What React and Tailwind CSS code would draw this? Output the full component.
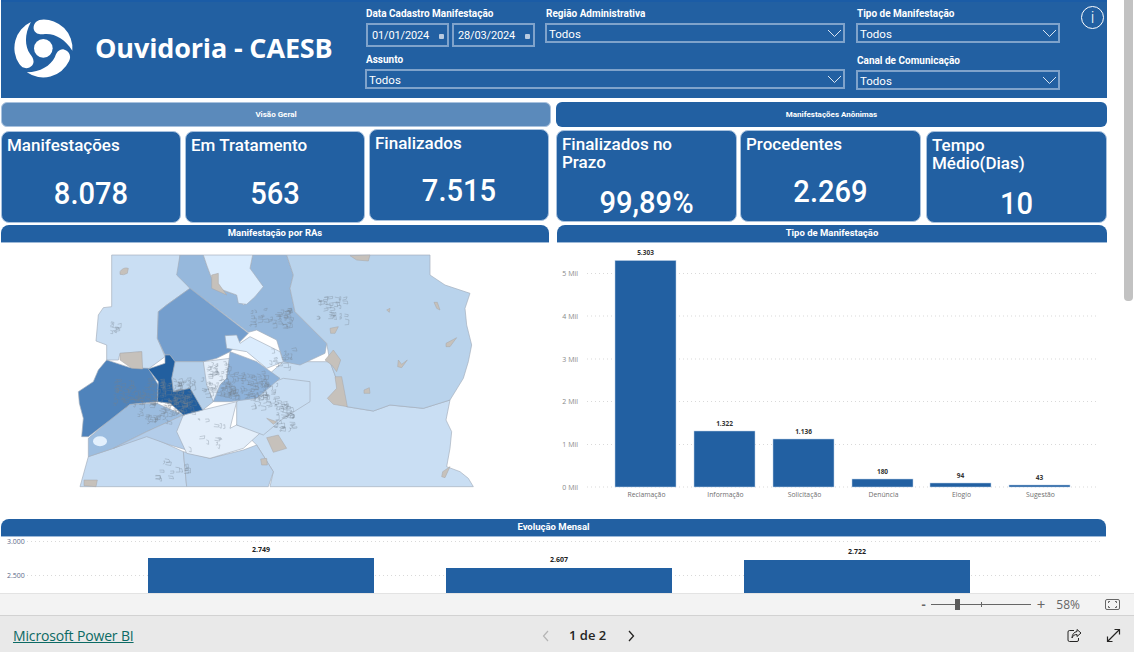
const DIN = "font-['Roboto',sans-serif]";
const SEGOE = "font-['Open_Sans',sans-serif]";

const CARDS_LEFT = [
  { title: ["Manifestações"], value: "8.078", box: "w-[180px] h-[92px] mt-[4px]", gap: "mt-[23px]" },
  { title: ["Em Tratamento"], value: "563", box: "w-[180px] h-[92px] mt-[4px] ml-[4px]", gap: "mt-[23px]" },
  { title: ["Finalizados"], value: "7.515", box: "w-[180px] h-[92px] mt-[2px] ml-[4px]", gap: "mt-[22px]" },
];

const CARDS_RIGHT = [
  { title: ["Finalizados no", "Prazo"], value: "99,89%", box: "w-[181px] h-[92px] mt-[3px]", gap: "mt-[15px]" },
  { title: ["Procedentes"], value: "2.269", box: "w-[181px] h-[92px] mt-[3px] ml-[3px]", gap: "mt-[22px]" },
  { title: ["Tempo", "Médio(Dias)"], value: "10", box: "w-[181px] h-[92px] mt-[4px] ml-[5px]", gap: "mt-[15px]" },
];

const TIPO_BARS = [
  { label: "Reclamação", value: "5.303", x: 615, top: 260.5 },
  { label: "Informação", value: "1.322", x: 694, top: 431 },
  { label: "Solicitação", value: "1.136", x: 773, top: 439 },
  { label: "Denúncia", value: "180", x: 852, top: 479 },
  { label: "Elogio", value: "94", x: 930, top: 483 },
  { label: "Sugestão", value: "43", x: 1009, top: 485 },
];

const TIPO_TICKS = [
  ["5 Mil", 273.5],
  ["4 Mil", 316],
  ["3 Mil", 359],
  ["2 Mil", 401.5],
  ["1 Mil", 444.5],
  ["0 Mil", 487],
];

// bairros do mapa, em ordem de pintura
const REGIONS = [
  ["#c9def3", "M125 30 L330 30 L325 90 L360 130 L290 180 L265 200 L262 280 L285 335 L235 372 L215 370 L215 320 L150 325 L145 345 L110 345 L110 300 L78 288 L85 210 L100 188 L125 185 Z"],
  ["#c9def3", "M640 350 L780 350 L830 485 L910 498 L960 480 L1060 490 L1140 465 L1128 525 L1145 560 L1140 610 L1130 665 L1170 680 L1195 700 L1210 725 L600 725 L610 680 L560 600 L500 540 L560 420 Z"],
  ["#96b8dc", "M330 30 L400 30 L410 60 L425 100 L440 130 L500 150 L520 180 L555 155 L545 110 L540 70 L548 30 L650 30 L670 90 L660 130 L675 200 L770 295 L765 325 L690 360 L640 350 L620 285 L560 255 L535 262 L360 130 L320 90 Z"],
  ["#dbecfd", "M400 30 L548 30 L540 70 L580 125 L555 155 L530 178 L505 175 L500 150 L445 130 L425 100 L410 60 Z"],
  ["#b9d3ec", "M650 30 L1080 30 L1080 90 L1125 120 L1200 145 L1185 190 L1190 240 L1205 300 L1195 350 L1180 400 L1140 465 L1060 490 L960 480 L910 498 L830 485 L780 350 L770 295 L675 200 L660 130 L670 90 Z"],
  ["#749ecd", "M360 130 L535 265 L500 300 L480 320 L440 340 L400 350 L315 350 L300 330 L285 330 L262 280 L265 200 L290 180 Z"],
  ["#c5dbf2", "M55 635 L130 610 L230 570 L340 620 L350 725 L30 725 Z"],
  ["#bbd4ee", "M340 620 L420 640 L520 615 L560 600 L610 680 L595 725 L350 725 Z"],
  ["#9cbde0", "M55 580 L120 525 L180 478 L260 475 L340 510 L230 560 L130 610 L55 635 Z"],
  ["#b3cdea", "M130 610 L230 560 L340 510 L390 570 L350 615 L300 600 L230 575 Z"],
  ["#e3eefa", "M340 510 L398 495 L500 470 L480 550 L500 540 L575 560 L520 610 L420 640 L350 625 L320 560 Z"],
  ["#c9def3", "M500 470 L560 430 L640 400 L720 410 L720 470 L640 520 L580 570 L500 540 Z"],
  ["#4f83bb", "M235 370 L180 368 L110 345 L85 375 L70 410 L25 440 L28 475 L40 520 L35 575 L55 575 L120 525 L180 478 L262 470 L265 420 Z"],
  ["#b6d0ea", "M315 350 L400 350 L430 470 L398 495 L360 430 L310 440 L305 400 Z"],
  ["#e3eefa", "M400 350 L480 340 L470 400 L430 470 L410 420 Z"],
  ["#8eb2da", "M480 320 L560 350 L630 400 L560 460 L480 470 L430 470 L450 420 L470 400 Z"],
  ["#225f9f", "M235 372 L285 355 L285 330 L300 330 L315 350 L305 400 L310 440 L360 430 L398 495 L340 510 L300 475 L262 470 L265 410 Z"],
  ["#dbecfd", "M465 272 L500 270 L510 295 L540 275 L630 320 L640 350 L590 370 L530 320 L470 310 Z"],
];

const BLOBS = [
  "M150 80 Q160 65 175 70 L172 85 Q160 92 150 88 Z",
  "M840 32 L900 30 L895 48 L860 45 Z",
  "M150 325 L215 320 L218 372 L185 370 L150 345 Z",
  "M765 345 L790 315 L812 345 L800 380 L785 360 Z",
  "M795 395 L815 395 L832 485 L790 478 L772 460 L800 430 Z",
  "M1128 295 L1160 278 L1140 305 L1128 305 Z",
  "M985 345 L995 358 L1012 345 L995 368 L983 365 Z",
  "M882 435 L898 428 L900 445 L882 445 Z",
  "M590 578 L625 570 L650 610 L610 622 Z",
  "M590 520 L620 530 L610 538 Z",
  "M42 705 L82 705 L78 725 L42 722 Z",
  "M572 642 L590 640 L592 660 L575 660 Z",
  "M1118 680 L1140 665 L1125 698 L1115 695 Z",
  "M1092 172 L1102 172 L1110 195 L1100 190 Z",
  "M950 195 L960 190 L958 202 Z",
  "M425 90 L445 85 L445 115 L470 150 L425 130 Z",
  "M780 250 L805 245 L795 265 L782 265 Z",
];

// manchas de ruas: centro x, centro y, raio x, raio y, quantidade
const STREETS = [
  [195, 440, 65, 40, 70],
  [320, 450, 50, 50, 110],
  [440, 400, 45, 50, 50],
  [520, 420, 75, 40, 80],
  [250, 510, 50, 20, 22],
  [580, 450, 45, 35, 25],
  [640, 510, 30, 40, 40],
  [630, 340, 35, 30, 15],
  [785, 190, 45, 35, 30],
  [600, 215, 60, 25, 40],
  [300, 670, 50, 30, 16],
  [400, 560, 60, 50, 12],
  [130, 245, 14, 20, 8],
];

function streetPaths() {
  let seed = 7;
  const rnd = () => {
    seed = (seed * 16807) % 2147483647;
    return seed / 2147483647;
  };
  const out = [];
  STREETS.forEach(([cx, cy, rx, ry, n]) => {
    for (let i = 0; i < n; i++) {
      const x = cx + (rnd() * 2 - 1) * rx;
      const y = cy + (rnd() * 2 - 1) * ry;
      const w = 4 + rnd() * 12;
      const h = 4 + rnd() * 10;
      out.push(`M${x} ${y} l${w} ${rnd() * 6 - 3} l${rnd() * 6 - 3} ${h} l${-w} ${rnd() * 6 - 3}`);
    }
  });
  return out.join(" ");
}

function Logo() {
  const blade = "M187 110 A86 86 0 0 0 95 17 C75 18 68 35 72 48 C78 62 92 62 105 60 C135 58 165 75 187 110 Z";
  return (
    <svg width="66" height="70" viewBox="0 0 198 210" className="mt-[-2px] shrink-0">
      <g fill="#ffffff">
        <circle cx="100" cy="103" r="28" />
        <path d={blade} />
        <path d={blade} transform="rotate(120 100 103)" />
        <path d={blade} transform="rotate(240 100 103)" />
      </g>
    </svg>
  );
}

function Select({ className = "" }) {
  return (
    <div className={`flex h-[20px] items-center justify-between border-2 border-[#7fa3cb] pl-[2px] pr-[1px] text-[11.5px] text-white ${className}`}>
      <span className="mt-[3px]">Todos</span>
      <svg width="15" height="9" viewBox="0 0 15 9" fill="none" stroke="#dbe6f2" strokeWidth="1">
        <path d="M1 1 L7.5 7.5 L14 1" />
      </svg>
    </div>
  );
}

function DateBox({ value }) {
  return (
    <div className="flex h-[24px] w-[83px] items-center justify-between border-2 border-[#7fa3cb] pl-[4px] pr-[3px] text-[11px] tracking-[-0.15px] text-white">
      <span className="mt-[2px]">{value}</span>
      <span className="mt-[2px] h-[5px] w-[5px] rounded-[1px] bg-[#b9cbe0]" />
    </div>
  );
}

function FilterLabel({ children }) {
  return <div className="ml-[1px] mb-[3px] h-[12px] text-[10px] font-bold leading-[12px] text-white">{children}</div>;
}

function Header() {
  return (
    <header className={`flex h-[98px] items-start border-t-2 border-[#1b5ca6] bg-[#2260a2] ${DIN}`}>
      <div className="flex h-full w-[364px] shrink-0 items-center pl-[9px]">
        <Logo />
        <span className={`mb-[3px] ml-[19px] whitespace-nowrap text-[27px] font-bold tracking-[-0.15px] text-white ${SEGOE}`}>Ouvidoria - CAESB</span>
      </div>
      <div className="grid grid-cols-[170px_301px_204px] gap-x-[10px] gap-y-[7px] pt-[6px]">
        <div>
          <FilterLabel>Data Cadastro Manifestação</FilterLabel>
          <div className="ml-[1px] flex gap-[3px]">
            <DateBox value="01/01/2024" />
            <DateBox value="28/03/2024" />
          </div>
        </div>
        <div>
          <FilterLabel>Região Administrativa</FilterLabel>
          <Select className="mr-[1px]" />
        </div>
        <div>
          <FilterLabel>Tipo de Manifestação</FilterLabel>
          <Select />
        </div>
        <div className="col-span-2">
          <FilterLabel>Assunto</FilterLabel>
          <Select className="mr-[1px]" />
        </div>
        <div className="mt-[1px]">
          <FilterLabel>Canal de Comunicação</FilterLabel>
          <Select />
        </div>
      </div>
      <div className="ml-[21px] mt-[4px] flex h-[23px] w-[23px] shrink-0 items-center justify-center rounded-full border-[1.5px] border-white text-[16px] font-light leading-none text-white">
        i
      </div>
    </header>
  );
}

function Card({ card }) {
  return (
    <div className={`shrink-0 rounded-[8px] border border-[#a9c2de] bg-[#2260a2] px-[5px] pt-[4px] text-white ${DIN} ${card.box}`}>
      <div className="text-[17px] font-medium leading-[18px]">
        {card.title.map((t) => (
          <div key={t}>{t}</div>
        ))}
      </div>
      <div className={`scale-x-[0.91] text-center text-[32px] font-medium leading-[32px] ${card.gap}`}>{card.value}</div>
    </div>
  );
}

function SectionTitle({ children, className }) {
  return (
    <div className={`flex h-[18px] items-center justify-center rounded-t-[8px] border-b border-[#9db9d8] bg-[#2260a2] text-[9.5px] font-bold text-white ${DIN} ${className}`}>
      {children}
    </div>
  );
}

function MapaRAs() {
  return (
    <div className="pl-[69px] pt-[2px]">
      <svg width="420" height="250" viewBox="0 0 1260 750">
        {REGIONS.map(([fill, d], i) => (
          <path key={i} d={d} fill={fill} stroke="#a3aebb" strokeWidth="2" strokeLinejoin="round" />
        ))}
        <path d={streetPaths()} fill="none" stroke="#76828f" strokeWidth="1.2" opacity="0.8" />
        {BLOBS.map((d, i) => (
          <path key={i} d={d} fill="#c6c1bb" stroke="#a6a7a8" strokeWidth="1.5" strokeLinejoin="round" />
        ))}
        <ellipse cx="90" cy="589" rx="21" ry="15" fill="#e3f0fd" />
      </svg>
    </div>
  );
}

// coordenadas do svg = coordenadas da tela menos a origem do bloco (556, 243)
function TipoChart() {
  return (
    <svg width="551" height="270" viewBox="556 243 551 270" className="block">
      {TIPO_TICKS.map(([label, y]) => (
        <g key={label}>
          <text x="578" y={y + 2.5} textAnchor="end" fontSize="7" fill="#8a8a8a" fontFamily="Open Sans">{label}</text>
          <line x1="587" x2="1098" y1={y} y2={y} stroke="#d9d9d9" strokeWidth="1" strokeDasharray="1 3" />
        </g>
      ))}
      {TIPO_BARS.map((b) => (
        <g key={b.label}>
          <rect x={b.x} y={b.top} width="61" height={487 - b.top} fill="#2260a2" stroke="#bcd0e6" strokeWidth="0.5" />
          <text x={b.x + 30.5} y={b.top - 5.5} textAnchor="middle" fontSize="6.5" fontWeight="700" fill="#333333" fontFamily="Open Sans">{b.value}</text>
          <text x={b.x + 31.5} y="497" textAnchor="middle" fontSize="6.8" fill="#6f6f6f" fontFamily="Open Sans">{b.label}</text>
        </g>
      ))}
    </svg>
  );
}

function EvolucaoChart() {
  const bars = [
    { x: 148, top: 558, value: "2.749" },
    { x: 446, top: 568, value: "2.607" },
    { x: 744, top: 560, value: "2.722" },
  ];
  return (
    <svg width="1106" height="56" viewBox="1 537 1106 56" className="block">
      <text x="7" y="544" fontSize="7" fill="#5d6b8a" fontFamily="Open Sans">3.000</text>
      <text x="7" y="578" fontSize="7" fill="#5d6b8a" fontFamily="Open Sans">2.500</text>
      <line x1="27" x2="1103" y1="541.5" y2="541.5" stroke="#d9d9d9" strokeDasharray="1 3" />
      <line x1="27" x2="1103" y1="575.5" y2="575.5" stroke="#d9d9d9" strokeDasharray="1 3" />
      {bars.map((b) => (
        <g key={b.x}>
          <rect x={b.x} y={b.top} width="226" height={593 - b.top} fill="#2260a2" />
          <text x={b.x + 113} y={b.top - 6} textAnchor="middle" fontSize="7" fontWeight="700" fill="#222222" fontFamily="Open Sans">{b.value}</text>
        </g>
      ))}
    </svg>
  );
}

function ZoomBar() {
  return (
    <div className={`flex h-[23px] shrink-0 items-center justify-end border-y border-[#d2d2d2] border-t-[#e3e3e3] bg-[#f3f3f3] pr-[14px] text-[#666666] ${SEGOE}`}>
      <span className="text-[13px] font-bold leading-none">-</span>
      <div className="relative ml-[5px] h-[1px] w-[100px] bg-[#666666]">
        <span className="absolute left-[24px] top-[-5px] h-[11px] w-[5px] bg-[#5c5c5c]" />
        <span className="absolute left-[50px] top-[-2px] h-[5px] w-[1px] bg-[#666666]" />
      </div>
      <span className="ml-[6px] text-[15px] leading-none">+</span>
      <span className="ml-[11px] text-[12px]">58%</span>
      <svg width="15" height="11" viewBox="0 0 15 11" className="ml-[25px]" fill="none" stroke="#666666">
        <rect x="0.5" y="0.5" width="14" height="10" rx="1.5" />
        <path d="M3.5 4 V2.5 H5 M10 2.5 H11.5 V4 M3.5 7 V8.5 H5 M10 8.5 H11.5 V7" />
      </svg>
    </div>
  );
}

function Footer() {
  return (
    <footer className={`flex h-[36px] shrink-0 items-center bg-[#e9e9e9] pl-[13px] pr-[13px] pt-[3px] ${SEGOE}`}>
      <a className="w-[120px] whitespace-nowrap text-[14px] tracking-[-0.15px] text-[#0c6a64] underline">Microsoft Power BI</a>
      <div className="ml-[406px] flex items-center">
        <svg width="14" height="14" viewBox="0 0 14 14" fill="none" stroke="#b5b5b5" strokeWidth="1.2">
          <path d="M9 2 L4.5 7 L9 12" />
        </svg>
        <span className="ml-[16px] text-[13px] font-semibold text-[#252423]">1 de 2</span>
        <svg width="14" height="14" viewBox="0 0 14 14" fill="none" stroke="#252423" strokeWidth="1.3" className="ml-[18px]">
          <path d="M5 2 L9.5 7 L5 12" />
        </svg>
      </div>
      <div className="ml-auto flex items-center">
        <svg width="15" height="15" viewBox="0 0 15 15" fill="none" stroke="#252423" strokeWidth="1">
          <path d="M7 2.5 H2.5 a1.5 1.5 0 0 0 -1.5 1.5 V12 a1.5 1.5 0 0 0 1.5 1.5 H10 a1.5 1.5 0 0 0 1.5 -1.5 V10" />
          <path d="M10 1.5 L14 5 L10 8.5 V6.5 C7.5 6.5 6 7.5 5 10 C5 6.5 7 4 10 3.5 Z" />
        </svg>
        <svg width="15" height="15" viewBox="0 0 15 15" fill="none" stroke="#252423" strokeWidth="1.2" className="ml-[24px]">
          <path d="M1.5 13.5 L13.5 1.5 M8.5 1.5 H13.5 V6.5 M1.5 8.5 V13.5 H6.5" />
        </svg>
      </div>
    </footer>
  );
}

export default function App() {
  return (
    <div className="flex h-[652px] w-[1134px] flex-col overflow-hidden bg-white">
      <div className="flex min-h-0 flex-1">
        <main className="ml-[1px] w-[1106px] shrink-0">
          <Header />
          <div className="mt-[4px] flex gap-[5px]">
            <section className="w-[550px] shrink-0">
              <div className={`flex h-[25px] items-center justify-center rounded-[6px] border border-[#a9c2de] bg-[#5b8abb] text-[8px] font-bold text-white ${DIN}`}>Visão Geral</div>
              <div className="flex h-[94px]">
                {CARDS_LEFT.map((c) => (
                  <Card key={c.value} card={c} />
                ))}
              </div>
              <SectionTitle className="mt-[4px] w-[548px]">Manifestação por RAs</SectionTitle>
              <MapaRAs />
            </section>
            <section className="w-[551px] shrink-0">
              <div className={`flex h-[25px] items-center justify-center rounded-[6px] bg-[#2260a2] text-[8px] font-bold text-white ${DIN}`}>Manifestações Anônimas</div>
              <div className="flex h-[94px]">
                {CARDS_RIGHT.map((c) => (
                  <Card key={c.value} card={c} />
                ))}
              </div>
              <SectionTitle className="ml-[1px] mt-[4px] w-[550px]">Tipo de Manifestação</SectionTitle>
              <TipoChart />
            </section>
          </div>
          <SectionTitle className="mt-[6px] w-[1105px]">Evolução Mensal</SectionTitle>
          <EvolucaoChart />
        </main>
        <div className="ml-[17px] w-[9px] shrink-0">
          <div className="h-[301px] rounded-b-[4px] bg-[#c2c2c2]" />
        </div>
      </div>
      <ZoomBar />
      <Footer />
    </div>
  );
}
